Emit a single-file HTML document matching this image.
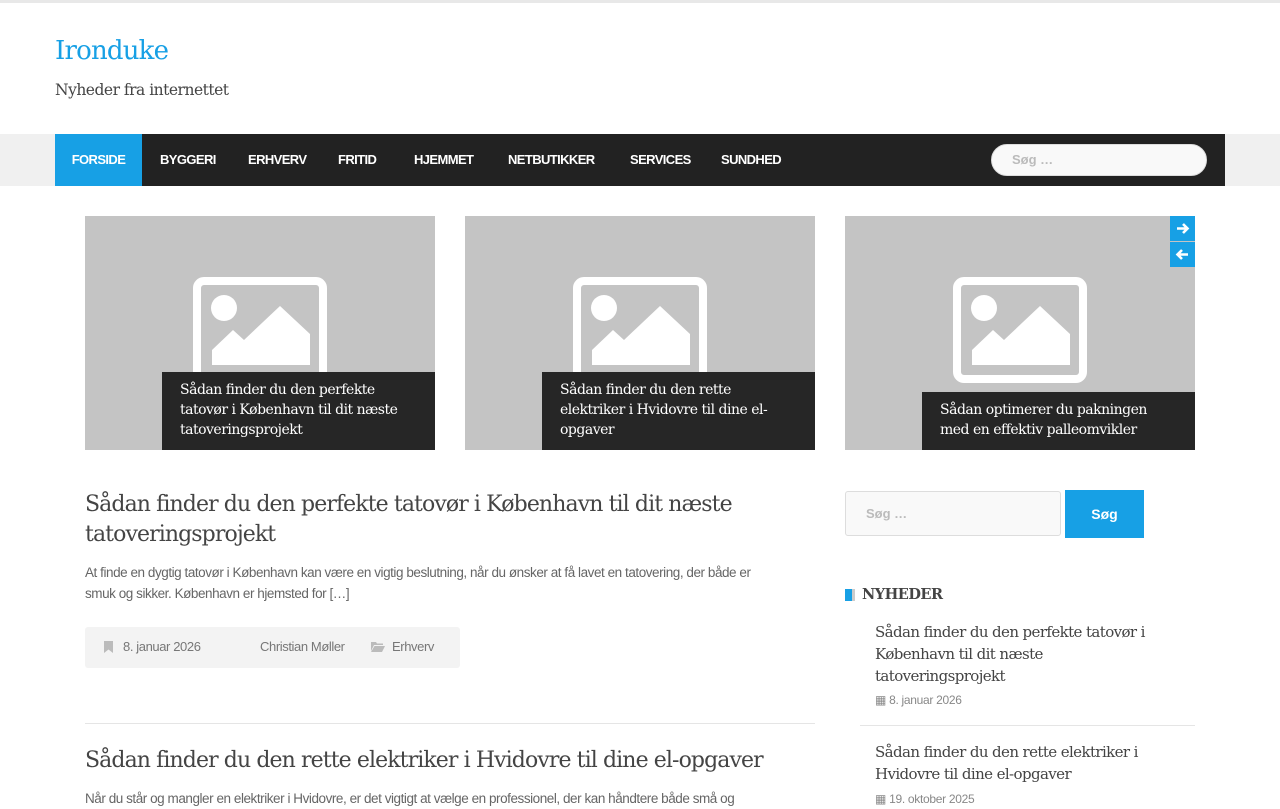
<!DOCTYPE html>
<html><head><meta charset="utf-8">
<style>
*{box-sizing:border-box;margin:0;padding:0}
body{width:1280px;height:800px;overflow:hidden;background:#fff;font-family:"Liberation Sans",sans-serif;color:#444;position:relative}
.serif{font-family:"DejaVu Serif","Liberation Serif",serif}
.abs{position:absolute}
#topb{left:0;top:0;width:1280px;height:3px;background:#e8e8e8}
#logo{left:55px;top:36px;font-size:26px;color:#17a0e5;letter-spacing:-0.8px}
#tag{left:55px;top:81px;font-size:15.5px;color:#444;letter-spacing:-0.5px}
#navbg{left:0;top:134px;width:1280px;height:52px;background:#f0f0f0}
#nav{left:55px;top:134px;width:1170px;height:52px;background:#222}
#nav a{position:absolute;top:0;height:52px;line-height:52px;color:#fff;font-weight:bold;font-size:13px;text-decoration:none;letter-spacing:-0.6px}
#nsearch{left:991px;top:144px;width:216px;height:32px;border-radius:16px;background:#f9f9f9;border:1px solid #ddd;font-size:13px;font-weight:bold;color:#bbb;padding:7px 20px}
.card{top:216px;width:350px;height:234px;background:#c4c4c4;overflow:hidden}
.card svg{position:absolute;left:0;top:0}
.cap{position:absolute;left:77px;right:0;bottom:0;background:#262626;color:#fff;font-size:14px;line-height:20px;padding:8px 18px 10px 18px;letter-spacing:-0.5px}
.arr{left:1170px;width:25px;height:25px;background:#17a0e5}
h2{font-weight:normal;font-size:22px;line-height:30px;color:#444;letter-spacing:-0.9px}
.ex{font-size:13.5px;line-height:21px;color:#666;letter-spacing:-0.45px}
#meta{left:85px;top:627px;width:375px;height:41px;background:#f3f3f3;border-radius:3px;font-size:13px;color:#777;letter-spacing:-0.4px}
#meta span{position:absolute;top:12px}
#sin{left:845px;top:491px;width:216px;height:45px;border:1px solid #ddd;background:#f9f9f9;border-radius:3px;font-size:13px;font-weight:bold;color:#bbb;padding:14px 20px}
#sbtn{left:1065px;top:490px;width:79px;height:48px;background:#17a0e5;color:#fff;font-weight:bold;font-size:14px;text-align:center;line-height:48px}
.sl{left:875px;font-size:15px;line-height:22px;color:#444;letter-spacing:-0.6px;width:285px}
.sd{left:875px;font-size:12px;color:#888;letter-spacing:-0.3px}
</style></head><body>
<div class="abs" id="topb"></div>
<div class="abs serif" id="logo">Ironduke</div>
<div class="abs serif" id="tag">Nyheder fra internettet</div>
<div class="abs" id="navbg"></div>
<div class="abs" id="nav">
<a style="left:0;width:87px;background:#17a0e5;text-align:center">FORSIDE</a>
<a style="left:105px">BYGGERI</a>
<a style="left:193px">ERHVERV</a>
<a style="left:283px">FRITID</a>
<a style="left:359px">HJEMMET</a>
<a style="left:453px">NETBUTIKKER</a>
<a style="left:575px">SERVICES</a>
<a style="left:666px">SUNDHED</a>
</div>
<div class="abs" id="nsearch">Søg …</div>

<div class="abs card" style="left:85px">
<svg width="350" height="234"><rect x="112" y="65" width="126" height="98" rx="7" fill="none" stroke="#fff" stroke-width="8"/><circle cx="139" cy="92" r="13" fill="#fff"/><path d="M127 149V134L148 114L159 124L195 90L225 118V149Z" fill="#fff"/></svg>
<div class="cap serif">Sådan finder du den perfekte tatovør i København til dit næste tatoveringsprojekt</div></div>
<div class="abs card" style="left:465px">
<svg width="350" height="234"><rect x="112" y="65" width="126" height="98" rx="7" fill="none" stroke="#fff" stroke-width="8"/><circle cx="139" cy="92" r="13" fill="#fff"/><path d="M127 149V134L148 114L159 124L195 90L225 118V149Z" fill="#fff"/></svg>
<div class="cap serif">Sådan finder du den rette elektriker i Hvidovre til dine el-opgaver</div></div>
<div class="abs card" style="left:845px">
<svg width="350" height="234"><rect x="112" y="65" width="126" height="98" rx="7" fill="none" stroke="#fff" stroke-width="8"/><circle cx="139" cy="92" r="13" fill="#fff"/><path d="M127 149V134L148 114L159 124L195 90L225 118V149Z" fill="#fff"/></svg>
<div class="cap serif">Sådan optimerer du pakningen med en effektiv palleomvikler</div></div>
<div class="abs arr" style="top:216px"><svg width="25" height="25"><path d="M7 12.5H17M13 8L17.5 12.5L13 17" stroke="#fff" stroke-width="2.6" fill="none"/></svg></div>
<div class="abs arr" style="top:242px"><svg width="25" height="25"><path d="M18 12.5H8M12 8L7.5 12.5L12 17" stroke="#fff" stroke-width="2.6" fill="none"/></svg></div>

<h2 class="abs serif" style="left:85px;top:490px;width:730px">Sådan finder du den perfekte tatovør i København til dit næste tatoveringsprojekt</h2>
<div class="abs ex" style="left:85px;top:562px;width:685px">At finde en dygtig tatovør i København kan være en vigtig beslutning, når du ønsker at få lavet en tatovering, der både er smuk og sikker. København er hjemsted for […]</div>
<div class="abs" id="meta">
<svg class="abs" style="left:19px;top:14px" width="10" height="12"><path d="M0 0H9V12L4.5 8.5L0 12Z" fill="#bbb"/></svg>
<span style="left:38px">8. januar 2026</span>
<span style="left:175px">Christian Møller</span>
<svg class="abs" style="left:286px;top:14px" width="14" height="11"><path d="M0 1H5L6 2.5H12V4H3L0 10Z M3.5 5H14L11 11H0Z" fill="#bbb"/></svg>
<span style="left:307px">Erhverv</span>
</div>
<div class="abs" style="left:85px;top:723px;width:730px;height:1px;background:#e5e5e5"></div>
<h2 class="abs serif" style="left:85px;top:746px;width:760px">Sådan finder du den rette elektriker i Hvidovre til dine el-opgaver</h2>
<div class="abs ex" style="left:85px;top:788px;width:730px;white-space:nowrap;overflow:hidden">Når du står og mangler en elektriker i Hvidovre, er det vigtigt at vælge en professionel, der kan håndtere både små og</div>

<div class="abs" id="sin">Søg …</div>
<div class="abs" id="sbtn">Søg</div>
<div class="abs" style="left:845px;top:589px;width:10px;height:12px;background:#ccc"></div>
<div class="abs" style="left:845px;top:589px;width:7px;height:12px;background:#17a0e5"></div>
<div class="abs serif" style="left:862px;top:586px;font-size:14.5px;font-weight:bold;color:#444;letter-spacing:-0.5px">NYHEDER</div>
<div class="abs sl serif" style="top:621px">Sådan finder du den perfekte tatovør i København til dit næste tatoveringsprojekt</div>
<div class="abs sd" style="top:693px">&#9638; 8. januar 2026</div>
<div class="abs" style="left:860px;top:725px;width:335px;height:1px;background:#e5e5e5"></div>
<div class="abs sl serif" style="top:741px">Sådan finder du den rette elektriker i Hvidovre til dine el-opgaver</div>
<div class="abs sd" style="top:792px">&#9638; 19. oktober 2025</div>
</body></html>
